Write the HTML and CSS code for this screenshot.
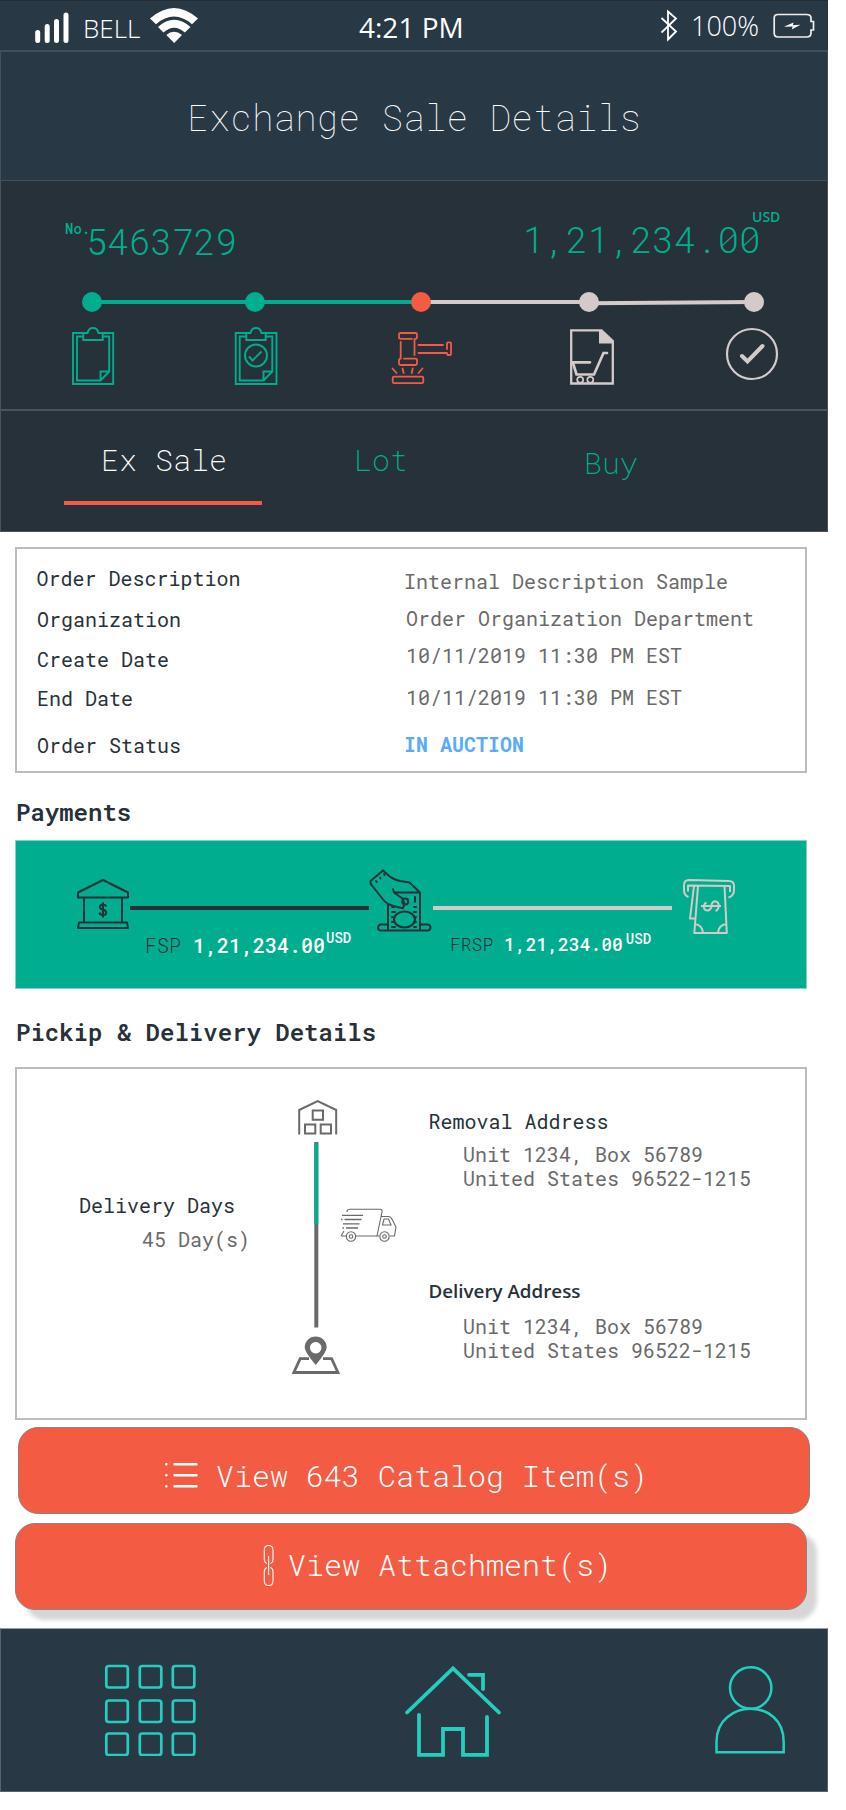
FILE: index.html
```html
<!DOCTYPE html>
<html lang="en">
<head>
<meta charset="utf-8">
<title>Exchange Sale Details</title>
<link rel="stylesheet" href="styles.css">
</head>
<body>
<main class="phone">
  <header class="status">
    <svg class="signal" width="36" height="34" viewBox="34 10 36 34" stroke="#fff" stroke-width="5" stroke-linecap="round"><path d="M37.7 32.5v8M47.2 26.500v14M56.500 21.500v19M66 15v25.500"/></svg>
    <span class="carrier">BELL</span>
    <svg class="wifi" width="50" height="38" viewBox="149 6 50 38" fill="#fff"><path d="M150 18.500Q174-2.500 198 18.500L192 24.200Q174 9 156 24.200Z"/><path d="M158 27Q174 12.500 190.500 27L184.800 32.500Q174 23 163.500 32.500Z"/><path d="M166.300 35Q174 28.500 182 35L174.200 43Z"/></svg>
    <span class="clock">4:21 PM</span>
    <svg class="bt" width="20" height="34" viewBox="659 9 20 34" fill="none" stroke="#fff" stroke-width="1.800"><path d="M661.500 18L676 31.500L668 39.500V11.500L676 18.500L661.500 32.500"/></svg>
    <span class="charge">100%</span>
    <svg class="battery" width="44" height="28" viewBox="772 12 44 28" fill="none" stroke="#f2eded" stroke-width="1.700"><path d="M778 14.500H806.500Q811 14.500 811 18V21.500H813.500V30H811V33Q811 37 806.500 37H778Q774.200 37 774.200 33V18Q774.200 14.500 778 14.500Z"/><path d="M784 26.800L793.500 22.500L792.800 25.200L800.500 24.800L791.800 29.500L792.500 26.500Z" fill="#fff" stroke="none"/></svg>
  </header>

  <h1 class="title">Exchange Sale Details</h1>

  <section class="summary">
    <div class="figures">
      <span class="no">No.</span><span class="number">5463729</span>
      <span class="total">1,21,234.00</span><span class="cur">USD</span>
    </div>
    <svg class="track" width="828" height="20" viewBox="0 292 828 20" stroke-width="4"><path d="M92 302H421" stroke="#00ad8e"/><path d="M421 302H589" stroke="#d4caca"/><path d="M589 303.200L754 302" stroke="#d4caca"/><g stroke="none"><g fill="#00ad8e"><circle cx="92" cy="302" r="10"/><circle cx="255" cy="302" r="10"/></g><circle cx="421" cy="302" r="10" fill="#f45b43"/><g fill="#d4caca"><circle cx="589" cy="302" r="10"/><circle cx="754" cy="302" r="10"/></g></g></svg>
    <div class="steps">
      <svg width="64" height="64" viewBox="61 325 64 64" fill="none" stroke="#00ad8e" stroke-width="1.900"><path d="M83.300 333H73V384H113.200V333H102.700M83.300 336.500H77V380.500H100.500L109.200 371.500V336.500H102.700M100.500 380.500V371.500H109.200M83.300 333H87.500Q88.500 328 93 328Q97.500 328 98.500 333H102.700V340H83.300Z"/></svg>
      <svg width="64" height="64" viewBox="223.500 325 64 64" fill="none" stroke="#00ad8e" stroke-width="1.900"><path d="M245.800 333H235.200V384H276V333H265.200M245.800 336.500H239.200V380.500H263L271.800 371.500V336.500H265.200M263 380.500V371.500H271.800M245.800 333H250Q251 328 255.500 328Q260 328 261 333H265.200V340H245.800Z"/><circle cx="255.500" cy="355.500" r="11"/><path d="M248.500 356.500L252 360.500L261 351.500"/></svg>
      <svg width="64" height="64" viewBox="390 325 64 64" fill="none" stroke="#f45b43" stroke-width="1.800" stroke-linecap="round"><path d="M412 338.800H400.500Q399 338.800 399 337V334.500Q399 333 400.500 333H415.500Q417 333 417 334.500V337Q417 338.800 415.500 338.800M400.700 342V358.700M414.500 339V355M404 358.700H415.500Q417 358.700 417 360V363.500Q417 365 415.500 365H400.500Q399 365 399 363.500V360Q399 358.700 400.500 358.700M418.500 345H443M418.500 353H447M447 349V343Q447 342.400 448 342.400H450Q451 342.400 451 343.500V354Q451 355 450 355H448Q447 355 447 353M392.500 368.500L396.500 373M402.500 368.500L403.700 373M412.700 368.500L411.700 373M422.500 368.500L418.500 373"/><rect x="392.700" y="376.700" width="30.600" height="6.500" rx="1.500"/></svg>
      <svg width="64" height="64" viewBox="560 325 64 64" fill="none" stroke="#d4caca" stroke-width="2.300"><path d="M571.200 330.300H601.500L612.800 341V383.500H571.200Z"/><path d="M599 330H602L613 341V343.500H599Z" fill="#d4caca" stroke="none"/><path d="M572 362.300H590M573 363L576.500 374.500H594L603.500 353H607" stroke-linecap="round" stroke-width="2.700"/><g stroke-width="1.700"><circle cx="580.200" cy="379.800" r="3"/><circle cx="590.300" cy="379.800" r="3"/></g></svg>
      <svg width="64" height="64" viewBox="720 325 64 64" fill="none" stroke="#d4caca"><circle cx="752" cy="354" r="25" stroke-width="2.200"/><path d="M742 356L747.500 361.500L762.500 346" stroke-width="4" stroke-linecap="round"/></svg>
    </div>
  </section>

  <nav class="tabs">
    <a class="tab active">Ex Sale</a>
    <a class="tab lot">Lot</a>
    <a class="tab buy">Buy</a>
  </nav>

  <section class="card order">
    <dl class="labels">
      <dt>Order Description</dt><dt>Organization</dt><dt>Create Date</dt><dt>End Date</dt><dt>Order Status</dt>
    </dl>
    <dl class="values">
      <dd class="out">Internal Description Sample</dd><dd>Order Organization Department</dd><dd>10/11/2019 11:30 PM EST</dd><dd>10/11/2019 11:30 PM EST</dd><dd class="out state">IN AUCTION</dd>
    </dl>
  </section>

  <h2 class="heading">Payments</h2>
  <section class="payments">
    <div class="flow">
      <svg width="54" height="66" viewBox="76 866 54 66" fill="none" stroke="#27313a" stroke-width="2" stroke-linejoin="round"><path d="M103 880L78 892.500V897.500H128V892.500ZM84 897.500V922M122 897.500V922M79 922.500H127L128 928H78Z"/><path d="M106.500 906.500Q105.500 904.500 103 904.500Q100 904.500 100 907Q100 909.200 103 909.700Q106.200 910.200 106.200 912.700Q106.200 915 103 915Q100 915 99.500 912.500M103 902.500V917.500"/></svg>
      <i class="link dark"></i>
      <svg width="64" height="66" viewBox="369 866 64 66" fill="none" stroke="#27313a" stroke-width="2" stroke-linejoin="round" stroke-linecap="round"><path d="M383 870.500L370.500 881Q370 883.500 372 885.500L383 899.500Q386 903.500 393 906L403 908.300L404.500 903.500L402.500 898.500L394 892.500Q393.500 891 393 889M383 870.500L388 875Q393 879.500 400 881L409.500 882.500L420 892.500V930M394 892.500H420M388 904V930M388 924.500H380.500Q378 925.500 378 927.500Q378 930 380.500 930.500H428Q430.500 930 430.500 927.500Q430.500 925 428 924.500H421"/><ellipse cx="404.500" cy="919.500" rx="10.500" ry="8"/><circle cx="405.200" cy="901.500" r="3"/><path d="M415 897v5M392 907h2M392 912h3M392 917h2M392 922h2M392 927h3M414 907h2M414 912h2M414 917h2M414 922h2M414 927h2M376 881l.6 1M380 877.500l.6 1M384 874l.6 1"/></svg>
      <i class="link pale"></i>
      <svg class="cash" width="56" height="66" viewBox="681 866 56 66" fill="none" stroke="#d4caca" stroke-width="2" stroke-linejoin="round"><path d="M688.500 897Q684 895.500 684 890V885Q684 880 689 880L729 881Q734 881 734 886V890Q734 896 728.500 897.500M688 891.500V885.500L730 886V892M694 886L690 918.500H694.500M698 886L694.300 933H726.800L724.500 886M694.500 924Q702.500 925 703 933M726.500 924Q718.500 925 718 933"/><path d="M701 906H721M706.500 902.500Q703.500 904 704 908Q705 911 708.500 910.500Q711.500 909 711.500 905.500Q712 901.500 715 901.300Q718.500 901.500 718.800 905.500Q718.500 910 715.500 911"/></svg>
    </div>
    <div class="amounts">
      <p class="pay fsp"><span>FSP</span> <b>1,21,234.00</b><em>USD</em></p>
      <p class="pay frsp"><span>FRSP</span> <b>1,21,234.00</b><em>USD</em></p>
    </div>
  </section>

  <h2 class="heading second">Pickip &amp; Delivery Details</h2>
  <section class="card delivery">
    <div class="days"><h3>Delivery Days</h3><p>45 Day(s)</p></div>
    <svg class="route" width="112" height="290" viewBox="289 1095 112 290" fill="none" stroke="#6a6a6a" stroke-width="2">
      <path d="M299.200 1134.500V1110L317.700 1101.200L336.200 1110V1134.500"/><path d="M312.700 1110.500h10.300v9.300h-10.300zM305 1124.500h10.300v9h-10.300zM320.700 1124.500h10.300v9h-10.300z"/>
      <path d="M316.300 1142V1327.500" stroke-width="4"/><path d="M316.300 1143V1224" stroke="#00ad8e" stroke-width="4"/>
      <g stroke-width="1.100"><path d="M347 1212V1211Q347.500 1209.200 350 1209.200H380Q382.500 1209.200 382 1212L377 1236M381 1216.500H388.500Q391 1216.500 392.500 1220L396 1227L394.500 1236H390M384 1219H388.500L391 1225H382.500ZM341 1236H346M356 1236H379M344 1231L341 1236"/><circle cx="351" cy="1236.500" r="4.700"/><circle cx="351" cy="1236.500" r="1.800"/><circle cx="384.500" cy="1236.500" r="4.700"/><circle cx="384.500" cy="1236.500" r="1.800"/></g>
      <path d="M342 1215.300h21M341 1219.500h1.500M344.500 1219.500h17M343 1223.800h16.500M342.500 1228h1.500M346 1228h12" stroke-width="1.300"/>
      <path d="M309 1358.700H300.200L293.800 1372.500H338L331.600 1358.700H323" stroke-width="2.800"/>
      <path d="M315.700 1365Q304.700 1352 304.700 1347.500A11 11 0 0 1 326.700 1347.500Q326.700 1352 315.700 1365ZM315.700 1342A5.700 5.700 0 1 0 315.710 1342Z" fill="#6a6a6a" stroke="none" fill-rule="evenodd"/>
    </svg>
    <div class="places">
      <h3>Removal Address</h3>
      <p>Unit 1234, Box 56789<br>United States 96522-1215</p>
      <h3 class="to">Delivery Address</h3>
      <p>Unit 1234, Box 56789<br>United States 96522-1215</p>
    </div>
  </section>

  <button class="action catalog">
    <svg width="36" height="30" viewBox="163 1460 36 30" stroke="#fff" stroke-width="2.500" stroke-linecap="round"><path d="M174.500 1464.200H196.500M174.500 1475.200H196.500M174.500 1486.200H196.500M166.300 1464.200h.1M166.300 1475.200h.1M166.300 1486.200h.1"/></svg>
    <span>View 643 Catalog Item(s)</span>
  </button>
  <button class="action attach">
    <svg width="14" height="44" viewBox="262 1543 14 44" fill="none" stroke="#fff" stroke-width="1.100"><path d="M267 1563.500Q264.300 1562.500 264.300 1559.500V1550Q264.300 1545.500 268.600 1545.500Q273 1545.500 273 1550V1559.500Q273 1562.500 270.300 1563.500M267 1567.500Q264.300 1568.500 264.300 1571.500V1581Q264.300 1585.500 268.600 1585.500Q273 1585.500 273 1581V1571.500Q273 1568.500 270.300 1567.500M268.600 1556V1575"/></svg>
    <span>View Attachment(s)</span>
  </button>

  <footer class="dock">
    <svg width="92" height="92" viewBox="104 1664 92 92" fill="none" stroke="#24cebf" stroke-width="2.700"><g id="r"><rect x="106.300" y="1666" width="21.500" height="21.500" rx="2.500"/><rect x="139.800" y="1666" width="21.500" height="21.500" rx="2.500"/><rect x="172.800" y="1666" width="21.500" height="21.500" rx="2.500"/></g><use href="#r" y="34.500"/><use href="#r" y="67.500"/></svg>
    <svg class="home" width="100" height="96" viewBox="403 1664 100 96" fill="none" stroke="#24cebf" stroke-width="3.800" stroke-linecap="round"><path d="M407 1712.500L453 1668.500L499 1712.500M469 1674.800H483V1689M419 1715V1754.800H443V1729H463V1754.800H487V1717"/></svg>
    <svg class="user" width="74" height="90" viewBox="713 1664 74 90" fill="none" stroke="#24cebf" stroke-width="2.500"><circle cx="750.700" cy="1688" r="20.700"/><path d="M716.500 1752.300V1742Q716.500 1726 727.500 1717Q737 1708.700 750.500 1708.700Q764 1708.700 773.500 1717Q783.700 1726 783.700 1742V1752.300Z"/></svg>
  </footer>
</main>
</body>
</html>
```
FILE: styles.css
```css
* { box-sizing: border-box; }
body { margin: 0; background: #fff; font-family: "Roboto Mono", "Liberation Mono", monospace; font-size: 20px; }
h1, h2, h3, p, dl, dd, dt { margin: 0; font-weight: 400; }
svg { display: block; flex: none; }
.phone { width: 828px; display: flex; flex-direction: column; }

.status { height: 51px; background: #283845; border-top: 1px solid #222e37; border-bottom: 1px solid #444f58; display: flex; align-items: flex-start; color: #fff; font-family: "Segoe UI", "Open Sans", sans-serif; white-space: nowrap; }
.signal { margin: 9px 0 0 34px; }
.carrier { width: 66px; margin-left: 13px; font-size: 26px; font-weight: 300; line-height: 54px; }
.wifi { margin-top: 5px; }
.clock { width: 119px; margin-left: 160px; font-size: 28px; line-height: 53px; }
.bt { margin: 8px 0 0 181px; }
.charge { width: 71px; margin-left: 12px; font-size: 27px; font-weight: 300; line-height: 49px; }
.battery { margin: 11px 0 0 10px; }

.title { height: 130px; padding-top: 45px; background: #283845; border: 1px solid #444f58; color: #fff; font-size: 36px; font-weight: 100; line-height: 40px; text-align: center; }

.summary { height: 230px; background: #273139; border: solid #4b535a; border-width: 0 1px 2px; color: #00ad8e; }
.figures { display: flex; align-items: flex-start; height: 111px; padding: 30px 0 0 64px; white-space: nowrap; }
.no { font-size: 14px; font-weight: 500; line-height: 20px; margin-top: 8px; width: 21px; }
.number { font-size: 36px; font-weight: 300; line-height: 40px; margin-top: 10px; width: 437px; }
.total { font-size: 36px; font-weight: 300; line-height: 40px; margin-top: 8px; width: 229px; }
.cur { margin-top: -3px; font: 600 14px/18px "Open Sans", sans-serif; }
.track { margin-left: -1px; }
.steps { display: grid; grid-template-columns: 162.500px 166.500px 170px 160px 64px; padding: 13px 0 0 60px; }

.tabs { height: 121px; display: flex; align-items: flex-start; background: #273139; border: solid #4b535a; border-width: 0 1px 1px; padding: 29px 0 0 63px; color: #00ad8e; font-size: 30px; font-weight: 250; line-height: 40px; }
.active { width: 198px; height: 65px; border-bottom: 4px solid #f45b43; padding-left: 37px; color: #fff; font-weight: 200; }
.lot { margin-left: 92px; }
.buy { margin: 3px 0 0 176px; }

.card { width: 792px; margin-left: 15px; border: 2px solid #bdbdbd; display: flex; }
.order { margin-top: 15px; height: 226px; }
.labels { padding: 16px 0 0 20px; width: 387px; color: #27313a; }
.labels dt { font-weight: 450; line-height: 26px; margin-bottom: 14px; }
.labels dt:nth-child(1) { margin: 0 0 15px -0.500px; }
.labels dt:nth-child(3) { margin-bottom: 13px; }
.labels dt:nth-child(4) { margin-bottom: 21px; }
.values { padding: 19px 0 0 2px; color: #6a6a6a; }
.values dd { line-height: 26px; margin-bottom: 11px; }
.values dd:nth-child(3) { margin-bottom: 16px; }
.values dd:nth-child(4) { margin-bottom: 21px; }
.values .out { margin-left: -2px; }
.values .state { color: #58abff; font-weight: 700; }

.heading { margin-left: 15px; height: 67px; padding: 23px 0 0 1px; font-size: 24px; line-height: 32px; font-weight: 600; color: #27313a; }
.payments { width: 792px; height: 149px; margin-left: 15px; background: #00ad8e; border: 1px solid #80d4c4; padding-top: 25px; color: #27313a; }
.flow { display: flex; height: 66px; padding-left: 60px; }
.flow svg { overflow: visible; }
.link { height: 4px; width: 239px; margin-top: 40px; }
.dark { background: #27313a; }
.pale { background: #d4caca; }
.cash { margin-left: 9px; }
.amounts { display: flex; padding-left: 129px; }
.pay { white-space: pre; line-height: 26px; }
.pay span { font-weight: 300; }
.pay b { color: #fff; font-weight: 500; }
.pay em { color: #fff; font-style: normal; font-weight: 500; font-size: 14px; line-height: 0; vertical-align: 10px; }
.fsp { width: 305px; }
.fsp em { margin-left: 1px; }
.frsp { font-size: 18px; margin-top: -1px; }
.frsp em { margin-left: 3px; vertical-align: 7px; }
.heading.second { height: 78px; padding-top: 27px; }

.delivery { height: 353px; font-size: 20px; color: #6a6a6a; }
.delivery h3 { font-size: 20px; font-weight: 450; color: #27313a; line-height: 26px; }
.days { padding: 123px 0 0 62px; width: 272px; }
.days p { padding-left: 63px; line-height: 26px; margin-top: 8px; }
.route { margin-top: 26px; }
.places { padding: 39px 0 0 27.500px; }
.places p { padding-left: 34.500px; line-height: 24px; margin-top: 8px; }
.delivery .to { margin-top: 89px; font: 600 18.800px/24px "Open Sans", sans-serif; }
.places .to + p { margin-top: 11px; }

.action { width: 792px; height: 87px; border: 1px solid #8c8480; border-radius: 20px; background: #f45b43; color: #fff; font-family: inherit; font-size: 30px; font-weight: 300; line-height: 40px; display: flex; align-items: flex-start; padding: 0; white-space: nowrap; }
.catalog { margin: 7px 0 0 18px; }
.catalog svg { margin: 32px 0 0 144px; }
.catalog span { margin: 28px 0 0 17px; }
.attach { margin: 9px 0 0 15px; box-shadow: 10px 10px 4px #d6d6d6; }
.attach svg { margin: 19px 0 0 246px; }
.attach span { margin: 21px 0 0 12px; }

.dock { height: 164px; margin-top: 18px; background: #283845; border: 1px solid #59636b; border-top-color: #9a9fa3; display: flex; padding: 35px 0 0 103px; }
.home { margin-left: 207px; }
.user { margin-left: 210px; }
```
